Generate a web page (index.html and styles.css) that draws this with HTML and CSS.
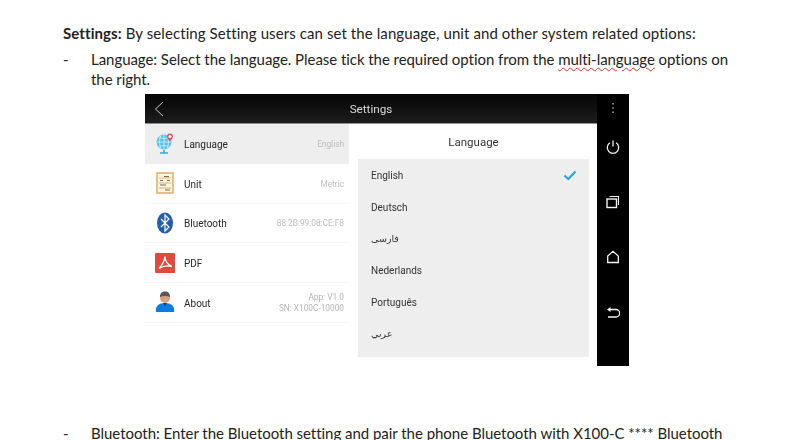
FILE: index.html
```html
<!DOCTYPE html>
<html lang="en">
<head>
<meta charset="utf-8">
<title>Settings</title>
<link rel="stylesheet" href="styles.css">
</head>
<body>
<main class="doc">
  <p class="intro"><b>Settings:</b> By selecting Setting users can set the language, unit and other system related options:</p>
  <div class="bullet first">
    <span class="dash">-</span>
    <p>Language: Select the language. Please tick the required option from the <span class="spell">multi-language</span> options on the right.</p>
  </div>
  <section class="phone">
    <div class="screen">
      <header class="topbar">
        <svg class="back" viewBox="0 0 14 20" width="14" height="20"><path d="M11 3 L3.500 10 L11 17" fill="none" stroke="#c9c9c9" stroke-width="1"/></svg>
        <span class="title">Settings</span>
      </header>
      <div class="panes">
        <ul class="menu">
          <li class="row active">
            <svg class="ico" viewBox="0 0 20 22" width="20" height="22">
              <circle cx="9" cy="9" r="7.5" fill="#58c3e6"/>
              <path d="M2 9h14M9 1.500v15M4 4c3 2 7 2 10 0M4 14c3-2 7-2 10 0M6 2.500c-2 4-2 9 0 13M12 2.500c2 4 2 9 0 13" stroke="#e8f7fc" stroke-width=".7" fill="none"/>
              <path d="M5 20h8M9 17v3" stroke="#2fa8d5" stroke-width="1.600"/>
              <path d="M15 .5a3 3 0 0 1 3 3c0 2-3 5-3 5s-3-3-3-5a3 3 0 0 1 3-3z" fill="#e8506a"/>
              <circle cx="15" cy="3.400" r="1.500" fill="#fff"/>
            </svg>
            <span class="label">Language</span>
            <span class="value">English</span>
          </li>
          <li class="row">
            <svg class="ico" viewBox="0 0 18 22" width="18" height="22">
              <rect x="1" y="1" width="16" height="20" fill="#fdf6e3" stroke="#dcb56d" stroke-width="1.600"/>
              <path d="M3 6h12M3 11h12M3 16h12" stroke="#d7b271" stroke-width="1"/>
              <path d="M8 4.500h5M4 8.500h3M11 8.500h3M4 13h6M9 18h5" stroke="#7d6a46" stroke-width="1.200"/>
            </svg>
            <span class="label">Unit</span>
            <span class="value">Metric</span>
          </li>
          <li class="row">
            <svg class="ico" viewBox="0 0 18 22" width="18" height="22">
              <ellipse cx="9" cy="11" rx="8" ry="10.500" fill="#1f5fae"/>
              <path d="M5 7 L13 15 L9 19 V3 L13 7 L5 15" fill="none" stroke="#fff" stroke-width="1.200"/>
            </svg>
            <span class="label">Bluetooth</span>
            <span class="value">88:2B:99:08:CE:F8</span>
          </li>
          <li class="row">
            <svg class="ico" viewBox="0 0 20 20" width="20" height="20">
              <rect width="20" height="20" rx="1" fill="#e2483d"/>
              <path d="M10 3.500c-.4 4.500-2.800 8.500-6 12M10 3.500c.2 4.500 3.200 8.500 7 10M4 15.500c4-2.500 9-3 13-2" fill="none" stroke="#fff" stroke-width="1.300"/>
            </svg>
            <span class="label">PDF</span>
          </li>
          <li class="row">
            <svg class="ico" viewBox="0 0 20 22" width="20" height="22">
              <path d="M1 21c-1-6 3-9 9-9s10 3 9 9z" fill="#0b7de0"/>
              <circle cx="10" cy="7" r="5" fill="#d9a27f"/>
              <path d="M5 6c0-4 2-5.500 5-5.500s5 1.500 5 5.500c-3-1.500-7-1.500-10 0z" fill="#5b5650"/>
              <path d="M8 12l2 3 2-3z" fill="#2b3a55"/>
            </svg>
            <span class="label">About</span>
            <span class="value two">App: V1.0<br>SN: X100C-10000</span>
          </li>
        </ul>
        <div class="detail">
          <h2 class="detail-title">Language</h2>
          <ul class="langs">
            <li class="lang">English
              <svg class="tick" viewBox="0 0 14 11" width="14" height="11"><path d="M1.500 5.500 L5.300 9 L12.500 1.500" fill="none" stroke="#2ea3d6" stroke-width="2.200"/></svg>
            </li>
            <li class="lang">Deutsch</li>
            <li class="lang ar" dir="rtl">فارسی</li>
            <li class="lang">Nederlands</li>
            <li class="lang">Português</li>
            <li class="lang ar" dir="rtl">عربي</li>
          </ul>
        </div>
      </div>
    </div>
    <nav class="rail">
      <svg class="dots" viewBox="0 0 4 12" width="4" height="12"><path d="M2 1v1.500M2 5.300v1.500M2 9.500v1.500" stroke="#b5b5b5" stroke-width="1.400"/></svg>
      <svg class="nav" viewBox="0 0 14 14" width="14" height="14"><path d="M4 2.800a5.700 5.700 0 1 0 6 0" fill="none" stroke="#f2f2f2" stroke-width="1.300"/><path d="M7 .5v6" stroke="#f2f2f2" stroke-width="1.300"/></svg>
      <svg class="nav" viewBox="0 0 14 14" width="14" height="14"><rect x="1" y="4" width="9.500" height="8.500" fill="none" stroke="#f2f2f2" stroke-width="1.400"/><path d="M3.500 1.500h9v8.500" fill="none" stroke="#f2f2f2" stroke-width="1.100"/></svg>
      <svg class="nav" viewBox="0 0 14 14" width="14" height="14"><path d="M1.700 12.500V6L7 1.300 12.300 6v6.500z" fill="none" stroke="#f2f2f2" stroke-width="1.300"/></svg>
      <svg class="nav" viewBox="0 0 14 14" width="14" height="14"><path d="M2.500 4.500H10a3 3 0 0 1 0 7.500H2" fill="none" stroke="#f2f2f2" stroke-width="1.300"/><path d="M1 4.500L4.500 2v5z" fill="#f2f2f2"/></svg>
    </nav>
  </section>
  <div class="bullet last">
    <span class="dash">-</span>
    <p>Bluetooth: Enter the Bluetooth setting and pair the phone Bluetooth with X100-C **** Bluetooth</p>
  </div>
</main>
</body>
</html>
```

FILE: styles.css
```css
* { box-sizing: border-box; }
html, body { margin: 0; height: 100%; }
body { background: #fff; overflow: hidden; }
p, ul, h2 { margin: 0; padding: 0; }
ul { list-style: none; }
.doc {
  width: 790px; height: 440px; overflow: hidden;
  padding: 23px 0 0 63px;
  font: 15px/20px Lato, "Liberation Sans", sans-serif;
  color: #222;
}
.intro { height: 20px; white-space: nowrap; letter-spacing: .09px; }
.intro b { font-weight: 700; }
.bullet { display: flex; width: 670px; }
.dash { width: 28px; flex: none; }
.first { margin-top: 6px; height: 40px; }
.first p { letter-spacing: -.05px; }
.last { margin-top: 60px; line-height: 14px; }
.last p { white-space: nowrap; letter-spacing: -.03px; }
.spell {
  text-decoration: underline wavy #c0392b 1px;
  text-underline-offset: 2px;
}
.phone {
  display: flex; width: 484px; height: 272px;
  margin: 5px 0 0 82px;
  font-family: Roboto, "Liberation Sans", sans-serif;
  filter: blur(.35px);
}
.screen { flex: 1; display: flex; flex-direction: column; background: #fff; }
.topbar {
  flex: none; height: 30px; position: relative;
  display: flex; align-items: center; justify-content: center;
  background: linear-gradient(#050505, #1d1d1d);
  border-bottom: 1px solid #8c8c8c;
}
.back { position: absolute; left: 7px; top: 5px; }
.title { color: #d8d8d8; font-size: 11.7px; line-height: 30px; }
.panes { flex: 1; display: flex; }
.menu { width: 204px; flex: none; }
.row {
  height: 39.75px; display: flex; align-items: center;
  padding: 2px 5px 0 10px;
  border-bottom: 1px solid #f6f6f6;
  font-size: 10px; line-height: 11px;
}
.row.active { background: #eeeeee; border-bottom: 0; }
.ico { flex: none; width: 20px; margin-top: -2px; }
.label { color: #262626; margin-left: 9px; }
.value { margin-left: auto; color: #bdbdbd; font-size: 8.3px; text-align: right; }
.value.two { color: #b4b4b4; }
.detail { flex: 1; padding: 0 8px 0 9px; }
.detail-title {
  height: 35px; font-size: 11.5px; font-weight: 400; line-height: 36px;
  text-align: center; color: #333;
}
.langs { background: #eeeeee; height: 198px; padding: 0 13px; }
.lang {
  height: 31.8px; padding-top: 2px; font-size: 10px; color: #333;
  display: flex; align-items: center; justify-content: space-between;
}
.ar { justify-content: flex-end; padding: 1px 0 0; font-family: "DejaVu Sans", sans-serif; font-size: 9.500px; }
.tick { margin-right: -1px; }
.rail {
  width: 32px; flex: none; background: #000;
  display: flex; flex-direction: column; align-items: center;
  padding-top: 8px;
}
.dots { margin-bottom: 26px; }
.nav { margin-bottom: 41px; }
```
